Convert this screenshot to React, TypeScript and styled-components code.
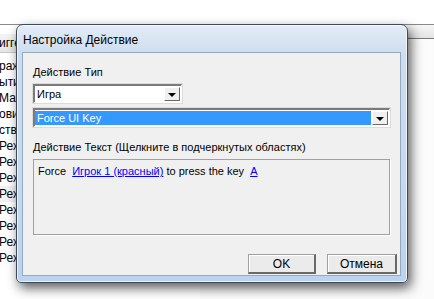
import React from 'react';
import styled, { createGlobalStyle } from 'styled-components';

const GlobalStyle = createGlobalStyle`
	html, body {
		margin: 0;
		padding: 0;
		background: #ffffff;
	}
	body {
		font-family: "Liberation Sans", Arial, sans-serif;
		font-size: 11px;
		color: #000000;
	}
`;

const backRows = ['ража', 'ытия', 'Марк', 'ови', 'ства', 'Режи', 'Режи', 'Режи', 'Режи', 'Режи', 'Режи', 'Режи', 'Режи'];

function App() {
	return (
		<Desktop>
			<GlobalStyle />
			<BackWindow>
				<LeftPane>
					<PaneHeader>игге</PaneHeader>
					{backRows.map((row, i) => (
						<BackRow key={i} $alt={i === 8}>
							{row}
						</BackRow>
					))}
				</LeftPane>
				<RightPane>
					<Band />
				</RightPane>
			</BackWindow>

			<Dialog>
				<TitleBar>Настройка Действие</TitleBar>
				<Client>
					<Label>Действие Тип</Label>
					<Combo $width={149}>
						<ComboText>Игра</ComboText>
						<DropButton>
							<Arrow />
						</DropButton>
					</Combo>
					<Combo $width={357} $gap={5}>
						<ComboText $selected>Force UI Key</ComboText>
						<DropButton>
							<Arrow />
						</DropButton>
					</Combo>
					<Label $top={13}>Действие Текст (Щелкните в подчеркнутых областях)</Label>
					<TextBox>
						Force <TextLink>Игрок 1 (красный)</TextLink> to press the key <TextLink>A</TextLink>
					</TextBox>
					<ButtonRow>
						<Button $width={68}>OK</Button>
						<Button $width={70}>Отмена</Button>
					</ButtonRow>
				</Client>
			</Dialog>
		</Desktop>
	);
}

const Desktop = styled.div`
	position: relative;
	width: 434px;
	height: 299px;
	overflow: hidden;
	background: #ffffff;
`;

const BackWindow = styled.div`
	position: absolute;
	left: 0;
	top: 24px;
	right: 0;
	bottom: 0;
	display: flex;
	border-top: 1px solid #8a8a8a;
	background: #ffffff;
`;

const LeftPane = styled.div`
	width: 200px;
	display: flex;
	flex-direction: column;
	padding-top: 9px;
`;

const PaneHeader = styled.div`
	height: 18px;
	line-height: 18px;
	background: linear-gradient(#f4f4f4, #e6e6e6);
	border-bottom: 1px solid #c8c8c8;
	margin-bottom: 5px;
	font-size: 12px;
	margin-left: -1px;
`;

const BackRow = styled.div<{ $alt?: boolean }>`
	height: 16px;
	line-height: 16px;
	font-size: 12px;
	margin-left: -1px;
	background: ${(p) => (p.$alt ? '#f2f2f2' : 'transparent')};
`;

const RightPane = styled.div`
	flex: 1;
	background: #fbfbfb;
`;

const Band = styled.div`
	height: 13px;
	background: linear-gradient(#f6f6f6, #e4e4e4);
	border-bottom: 1px solid #7a7a7a;
`;

const Dialog = styled.div`
	position: absolute;
	left: 16px;
	top: 24px;
	width: 392px;
	height: 259px;
	box-sizing: border-box;
	display: flex;
	flex-direction: column;
	border: 1px solid #3c4a5c;
	border-radius: 7px 7px 5px 5px;
	background: linear-gradient(180deg, #e3ecf7 0%, #cddcee 12%, #c6d9ee 60%, #bcd3ed 100%);
	box-shadow: inset 0 0 0 1px rgba(255, 255, 255, 0.7), 3px 5px 12px rgba(0, 0, 0, 0.65);
`;

const TitleBar = styled.div`
	height: 27px;
	line-height: 30px;
	padding-left: 6px;
	font-size: 12px;
	color: #000000;
`;

const Client = styled.div`
	flex: 1;
	margin: 0 6px 6px 5px;
	background: #f0f0f0;
	border: 1px solid #93a9c2;
	display: flex;
	flex-direction: column;
	padding: 12px 0 0 10px;
`;

const Label = styled.div<{ $top?: number }>`
	height: 14px;
	line-height: 14px;
	margin-top: ${(p) => p.$top ?? 0}px;
	margin-bottom: 5px;
`;

const Combo = styled.div<{ $width: number; $gap?: number }>`
	width: ${(p) => p.$width}px;
	height: 19px;
	box-sizing: border-box;
	margin-top: ${(p) => p.$gap ?? 0}px;
	display: flex;
	align-items: stretch;
	background: #ffffff;
	border-top: 2px solid #7a7a7a;
	border-left: 2px solid #7a7a7a;
	border-right: 1px solid #ffffff;
	border-bottom: 1px solid #ffffff;
	outline: 1px solid #dcdcdc;
	padding: 1px 1px 1px 0;
`;

const ComboText = styled.div<{ $selected?: boolean }>`
	flex: 1;
	line-height: 15px;
	padding-left: 2px;
	margin-right: 1px;
	background: ${(p) => (p.$selected ? '#3399ff' : '#ffffff')};
	color: ${(p) => (p.$selected ? '#ffffff' : '#000000')};
`;

const DropButton = styled.div`
	width: 16px;
	box-sizing: border-box;
	background: #f0f0f0;
	border-top: 1px solid #ffffff;
	border-left: 1px solid #ffffff;
	border-right: 1px solid #696969;
	border-bottom: 1px solid #696969;
	display: flex;
	align-items: center;
	justify-content: center;
`;

const Arrow = styled.div`
	width: 0;
	height: 0;
	border-left: 4px solid transparent;
	border-right: 4px solid transparent;
	border-top: 4px solid #000000;
	margin-top: 1px;
`;

const TextBox = styled.div`
	width: 357px;
	height: 76px;
	box-sizing: border-box;
	border: 1px solid #a0a0a0;
	box-shadow: 1px 1px 0 #ffffff;
	padding: 4px 4px;
	line-height: 14px;
`;

const TextLink = styled.span`
	color: #0000ff;
	text-decoration: underline;
	margin-left: 3px;
`;

const ButtonRow = styled.div`
	display: flex;
	justify-content: flex-end;
	gap: 11px;
	margin-top: 19px;
	margin-right: 3px;
`;

const Button = styled.div<{ $width: number }>`
	width: ${(p) => p.$width}px;
	height: 20px;
	box-sizing: border-box;
	display: flex;
	align-items: center;
	justify-content: center;
	font-size: 12px;
	background: #ebebeb;
	border-top: 1px solid #a0a0a0;
	border-left: 1px solid #a0a0a0;
	border-right: 2px solid #696969;
	border-bottom: 2px solid #696969;
	box-shadow: inset 1px 1px 0 #ffffff;
`;

export default App;
